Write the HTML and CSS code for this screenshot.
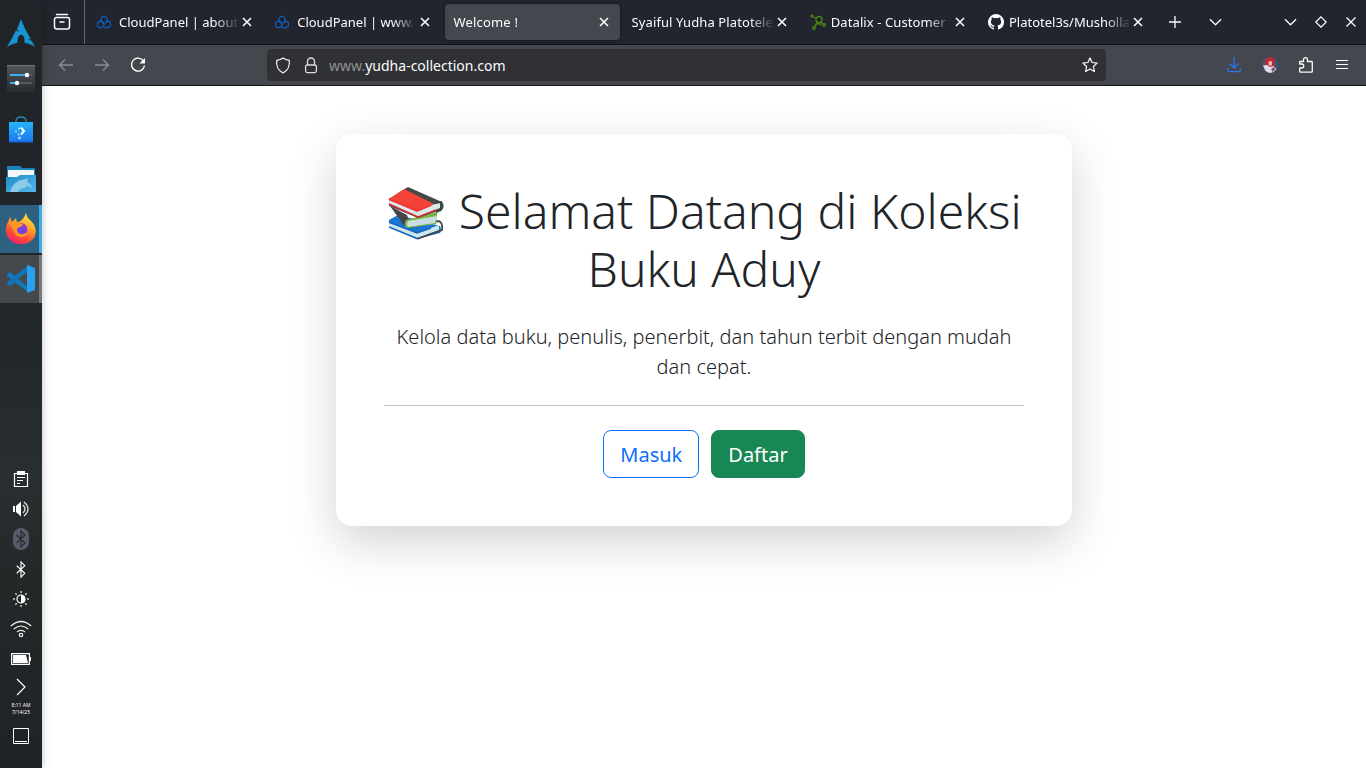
FILE: index.html
```html
<!DOCTYPE html>
<html lang="id">
<head>
<meta charset="utf-8">
<title>Welcome !</title>
<link rel="stylesheet" href="styles.css">
</head>
<body>
<svg class="defs" width="0" height="0">
  <defs>
    <linearGradient id="bagFill" x1="0" y1="0" x2="0" y2="1"><stop offset="0" stop-color="#25b5f8"/><stop offset="1" stop-color="#1a76f0"/></linearGradient>
    <linearGradient id="folderFill" x1="0" y1="0" x2="1" y2="1"><stop offset="0" stop-color="#1c8bc8"/><stop offset="1" stop-color="#55b9e9"/></linearGradient>
    <linearGradient id="foxFill" x1=".8" y1="0" x2=".3" y2="1"><stop offset="0" stop-color="#fff04a"/><stop offset=".4" stop-color="#ffa22a"/><stop offset=".72" stop-color="#ff4b36"/><stop offset="1" stop-color="#f01f75"/></linearGradient>
    <linearGradient id="setFill" x1="0" y1="0" x2="0" y2="1"><stop offset="0" stop-color="#55585b"/><stop offset="1" stop-color="#292c2f"/></linearGradient>
    <symbol id="x" viewBox="0 0 10 10"><path d="M1 1l8 8M9 1l-8 8" fill="none" stroke="currentColor" stroke-width="1.6"/></symbol>
    <symbol id="down" viewBox="0 0 14 8"><path d="M1 1l6 6 6-6" fill="none" stroke="currentColor" stroke-width="1.4"/></symbol>
    <symbol id="cloud" viewBox="0 0 14 14"><g fill="none" stroke="#0d5fc4" stroke-width="1.300" stroke-linecap="round"><path d="M4 6.200A3.300 3.300 0 1 1 9.900 6.200Q9.400 7.600 8 8"/><path d="M5.800 7.200A3.200 3.200 0 1 0 4 12.600Q6.200 12.600 7 10.400"/><path d="M9.900 6.200a3.250 3.250 0 1 1 .1 6.400H7.500M4 6.200Q7 7 7 10.400"/></g></symbol>
    <symbol id="bt" viewBox="0 0 12 18"><path d="M1.500 5l8.500 8-4 4V1l4 4-8.500 8" fill="none" stroke="currentColor" stroke-width="1.2"/></symbol>
  </defs>
</svg>
<div class="desktop">
  <aside class="dock">
    <div class="launch arch"><svg width="30" height="30" viewBox="0 0 30 30"><path d="M15 1C13.600 5 12.500 7.700 10.800 11.400l3 2.600-4-1.400C7.300 18 4.600 23 1 29c4.500-2.600 7.400-3.800 10.700-4.500-.5-4 .7-7.800 3.400-7.800s4 3.800 3.300 7.800c3.400.700 6.300 2 10.600 4.500L25.700 23l-4-2 3.200.3C20.600 13.500 17.400 8.200 15 1z" fill="#1793d1"/></svg></div>
    <div class="launch settings"><svg width="28" height="28" viewBox="0 0 28 28"><path d="M0 0h28v27H0z" fill="url(#setFill)"/><path d="M0 .5h28" stroke="#73777a"/><path d="M3 10h22M3 18h22" stroke="#56595c" stroke-width="2"/><path d="M3 10h17M3 18h7" stroke="#3daee9" stroke-width="2"/><circle cx="20" cy="10" r="2.200" fill="#fff"/><circle cx="10" cy="18" r="2.200" fill="#fff"/></svg></div>
    <div class="launch"><svg width="28" height="30" viewBox="0 0 28 30"><path d="M9 11V7q0-4 5-4t5 4v4" fill="none" stroke="#2389b8" stroke-width="1.300"/><path d="M2 8h24v20H2z" fill="url(#bagFill)"/><path d="M2 28h24" stroke="#1261c9"/><path d="M14 13.500l3 3.500-3 3.500" fill="none" stroke="#fff" stroke-width="2"/><g fill="#bfe6ff"><circle cx="9" cy="17.500" r=".9"/><circle cx="12" cy="14.500" r="1"/><circle cx="11.500" cy="20.500" r=".9"/><circle cx="12.500" cy="24" r="1.300"/></g></svg></div>
    <div class="launch"><svg width="30" height="26" viewBox="0 0 30 26"><path d="M1 0h13l2 2h13v14H1z" fill="#1683bc"/><path d="M2 4h26v12H2z" fill="#f4f7f9"/><path d="M0 11h11l3-2h16v17H0z" fill="url(#folderFill)"/><path d="M4 26c2-7 7-12 14-12.500l4-1.500-1 3.500c3 1.500 5 4.500 5 7l-5-3c-1 3-3 2-5 3-2 .5-3 1.500-4 3.500z" fill="#8acbe9"/></svg></div>
    <div class="launch running focused"><svg width="32" height="34" viewBox="0 0 32 34"><path d="M21 1c1 4 2 5 5 8 7 7 5 14 2 18-6 7-18 7-24 0C0 22 0 15 3 10l2-5 2 5 4-4 1 4c3 0 7-3 9-9z" fill="url(#foxFill)"/><circle cx="16" cy="17.500" r="6.300" fill="#7542e5"/><path d="M13 12q8-2 9 6-4-4-9-6z" fill="#9c38dc"/><path d="M3 11l6-1c4-1 6 2 9 2.500 0 3-5 2-6 4.500 0 3 1 4.500 4 5 3 1 4-2 7-1-3 6-12 5-14-1-1-3-1-5-6-9z" fill="#ff9822"/></svg></div>
    <div class="launch running"><svg width="30" height="30" viewBox="0 0 30 30"><path d="M1 10l3-2 19 14v7L1 12z" fill="#1277bb"/><path d="M1 20l3 2L23 8V1L1 18z" fill="#0e74b8"/><path d="M21 1l8 3v22l-8 3z" fill="#29a0ec"/><path d="M21 8v14l-9-7z" fill="#45494d"/></svg></div>
    <div class="tray">
      <div class="status"><svg width="16" height="18" viewBox="0 0 16 18"><path d="M1.500 3.500h13v13h-13z" fill="none" stroke="#fff" stroke-width="1.200"/><path d="M4 1h8v4H4z" fill="#fff"/><path d="M4 7.500h8M4 10.500h6M4 13.500h3" stroke="#fff"/></svg></div>
      <div class="status"><svg width="18" height="18" viewBox="0 0 18 18"><path d="M1 6h2v6H1zM4 6l5-4.500v15L4 12z" fill="#fff"/><path d="M11 5q4 4 0 8M12 2q8 7 0 14" fill="none" stroke="#ddd" stroke-width="1.300"/></svg></div>
      <div class="status"><span class="bt-off"><svg width="12" height="18"><use href="#bt"/></svg></span></div>
      <div class="status"><svg width="12" height="17"><use href="#bt"/></svg></div>
      <div class="status"><svg width="18" height="18" viewBox="0 0 18 18"><circle cx="9" cy="9" r="4" fill="none" stroke="#fff" stroke-width="1.200"/><path d="M9 5a4 4 0 0 1 0 8z" fill="#fff"/><path d="M9 1v2M9 15v2M1 9h2M15 9h2M3.300 3.300l1.500 1.500M13.200 13.200l1.500 1.500M14.700 3.300l-1.500 1.500M4.800 13.200l-1.500 1.500" stroke="#ccc" stroke-width="1.500"/></svg></div>
      <div class="status"><svg width="22" height="18" viewBox="0 0 22 18"><g fill="none" stroke="#eee" stroke-width="1.200"><path d="M.800 6q10.200-9 20.400 0M3.800 9q7.200-6 14.400 0M7 12q4-3.300 8 0"/><circle cx="11" cy="15" r="1.700"/></g></svg></div>
      <div class="status"><svg width="20" height="14" viewBox="0 0 20 14"><path d="M.600 1.600h17.800v10.800H.600z" fill="none" stroke="#fff" stroke-width="1.200"/><path d="M2 3h13l2 8H2zM19 5h1v4h-1z" fill="#fff"/></svg></div>
      <div class="status arrow"><svg width="10" height="18" viewBox="0 0 10 18"><path d="M1 1l8 8-8 8" fill="none" stroke="#fff" stroke-width="1.200"/></svg></div>
      <div class="clock">8:11 AM<br>7/14/25</div>
      <svg width="16" height="16" viewBox="0 0 16 16"><path d="M.500.500h15v15H.500zM2 13.500h12" fill="none" stroke="#fff"/></svg>
    </div>
  </aside>
  <main class="browser">
    <div class="tabbar">
      <div class="overview"><svg width="18" height="18" viewBox="0 0 18 18"><path d="M3.500 1.500h11M3.500 4.500h11a2 2 0 0 1 2 2v7a2.500 2.500 0 0 1-2.500 2.500H4a2.500 2.500 0 0 1-2.500-2.500v-7a2 2 0 0 1 2-2zM7 9h4" fill="none" stroke="#fbfbfe" stroke-width="1.500" stroke-linecap="round" stroke-linejoin="round"/></svg></div>
      <div class="tabs">
        <div class="tab"><svg class="fav" viewBox="0 0 14 14"><use href="#cloud"/></svg><span class="label">CloudPanel | about</span><svg class="close"><use href="#x"/></svg></div>
        <div class="tab"><svg class="fav" viewBox="0 0 14 14"><use href="#cloud"/></svg><span class="label">CloudPanel | www.</span><svg class="close"><use href="#x"/></svg></div>
        <div class="tab active"><span class="label wide">Welcome !</span><svg class="close"><use href="#x"/></svg></div>
        <div class="tab"><span class="label snug">Syaiful Yudha Platotele</span><svg class="close"><use href="#x"/></svg></div>
        <div class="tab"><svg class="fav datalix" viewBox="0 0 16 16"><g fill="none" stroke="#4c8514" stroke-width="1.300"><circle cx="9" cy="5.500" r="3"/><circle cx="4" cy="14" r="1.400"/><circle cx="14" cy="11" r="1.400"/><circle cx="2" cy="2" r="1"/><path d="M3 3l3 1M7.500 8l-3 4.500M10.500 8l2.500 2M5 12q3-4 6-1"/></g></svg><span class="label snug">Datalix - Customer</span><svg class="close"><use href="#x"/></svg></div>
        <div class="tab"><svg class="fav github" viewBox="0 0 16 16"><path fill="#fff" d="M8 0a8 8 0 0 0-2.530 15.590c.4.070.55-.17.55-.38v-1.490C3.800 14.190 3.330 12.780 3.330 12.780c-.36-.92-.89-1.170-.89-1.170-.73-.5.050-.49.050-.49.810.060 1.230.83 1.230.83.720 1.230 1.880.87 2.340.67.070-.52.280-.87.510-1.070-1.780-.2-3.640-.89-3.640-3.950 0-.87.310-1.590.820-2.150-.08-.2-.36-1.020.080-2.120 0 0 .67-.21 2.200.82a7.700 7.700 0 0 1 4 0c1.530-1.040 2.200-.82 2.200-.82.440 1.100.160 1.920.080 2.120.51.560.820 1.270.820 2.150 0 3.070-1.870 3.750-3.650 3.950.29.250.54.730.54 1.480v2.180c0 .21.150.46.550.38A8 8 0 0 0 8 0z"/></svg><span class="label">Platotel3s/Musholla</span><svg class="close"><use href="#x"/></svg></div>
      </div>
      <svg class="plus" width="12" height="12" viewBox="0 0 12 12"><path d="M6 0v12M0 6h12" stroke="#fbfbfe" stroke-width="1.300"/></svg>
      <svg class="list" width="13" height="8"><use href="#down"/></svg>
      <div class="controls">
        <svg width="13" height="8"><use href="#down"/></svg>
        <svg width="12" height="12" viewBox="0 0 12 12"><path d="M6 .800L11.200 6 6 11.200.800 6z" fill="none" stroke="#fff" stroke-width="1.200"/></svg>
        <svg width="12" height="12" viewBox="0 0 12 12"><path d="M1.500 1.500l9 9M10.500 1.500l-9 9" stroke="#fff" stroke-width="1.300"/></svg>
      </div>
    </div>
    <div class="toolbar">
      <div class="nav">
        <svg width="16" height="16" viewBox="0 0 16 16"><path d="M15 8H1.500M7 2.500L1.500 8 7 13.500" fill="none" stroke="#8b8c92" stroke-width="1.300"/></svg>
        <svg width="16" height="16" viewBox="0 0 16 16"><path d="M1 8h13.500M9 2.500L14.500 8 9 13.500" fill="none" stroke="#8b8c92" stroke-width="1.300"/></svg>
        <svg width="16" height="16" viewBox="0 0 16 16"><path d="M13.500 4A6.500 6.500 0 1 0 14.500 8.500" fill="none" stroke="#fbfbfe" stroke-width="1.400"/><path d="M15 1V6.500H9.500z" fill="#fbfbfe"/></svg>
      </div>
      <div class="url">
        <svg width="16" height="17" viewBox="0 0 16 17"><path d="M8 1c2 1.500 4 2 6.300 2.300C15 9 12.500 14 8 16 3.500 14 1 9 1.700 3.300 4 3 6 2.500 8 1z" fill="none" stroke="#fbfbfe" stroke-width="1.200" stroke-linejoin="round"/></svg>
        <svg width="14" height="17" viewBox="0 0 14 17"><path d="M3.500 8V4.500a3.500 3.500 0 0 1 7 0V8" fill="none" stroke="#ddd" stroke-width="1.300"/><rect x="1.600" y="8" width="10.800" height="7.600" rx="1.500" fill="none" stroke="#ddd" stroke-width="1.300"/></svg>
        <span class="address"><span class="dim">www.</span>yudha-collection.com</span>
        <svg width="16" height="16" viewBox="0 0 16 16"><path d="M8 .900l2.100 4.600 5 .6-3.700 3.400 1 5L8 12l-4.400 2.500 1-5L.900 6.100l5-.6z" fill="none" stroke="#fbfbfe" stroke-width="1.200" stroke-linejoin="round"/></svg>
      </div>
      <div class="tools">
        <svg width="16" height="16" viewBox="0 0 16 16"><path d="M8 0v11M3.500 6.500L8 11l4.500-4.500M1.600 11.500v1.600q0 1.600 1.600 1.600h9.600q1.600 0 1.600-1.600v-1.600" fill="none" stroke="#2874f5" stroke-width="1.300"/></svg>
        <svg width="16" height="16" viewBox="0 0 16 16"><circle cx="8" cy="8" r="8" fill="#3b5674"/><path d="M3.500 8Q2 .500 8 0q6 .500 4.500 6.500L12 10H5z" fill="#bf2734"/><path d="M6.500 5q2-2 3.500 0v3l-2 1-1.500-1z" fill="#edb4af"/><path d="M1 8.500l4-.5 3 2 3.500-1 3 3-3 3-4 1-4-2z" fill="#e2dcea"/><path d="M9 12l3-2 1.500 2-3 3z" fill="#7b5268"/></svg>
        <svg width="16" height="16" viewBox="0 0 16 16"><path d="M2 4.500h3.500v-1.800a2 2 0 0 1 4 0v1.800h4q.800 0 .800.800v9q0 .900-.900.900H2.600q-.900 0-.900-.9V11h2a2 2 0 0 0 0-4h-2V4.500z" fill="none" stroke="#fbfbfe" stroke-width="1.300" stroke-linejoin="round"/></svg>
        <svg width="16" height="16" viewBox="0 0 16 16"><path d="M2 3.500h12M2 7.500h12M2 11.500h12" stroke="#fbfbfe" stroke-width="1.200"/></svg>
      </div>
    </div>
    <section class="page">
      <div class="card">
        <h1><svg class="books" width="58" height="54" viewBox="0 0 58 54"><path d="M2 34l9-5 16 4 26 7q2 4 0 7L30 53 2 41z" fill="#1976d2"/><path d="M2 37l28 10 22-8v5L30 52 2 41z" fill="#cfe6ec"/><path d="M22 41l30-6q4 2 3 9L30 53" fill="none" stroke="#454749" stroke-width="1.800"/><path d="M2 36l28 11 14-5M2 41l28 11.500" fill="none" stroke="#1769bd" stroke-width="1.600"/><path d="M3 20l17 9 4 12q-5 1-8-3z" fill="#444649"/><path d="M19 34l31-8v3l-1 9-29 4q-4-3-1-8z" fill="#7cb342"/><path d="M21 35l29-5-2 7-27 4q-2-3 0-6z" fill="#c8dfe1"/><path d="M2 13L21 1l34 15q3 5-1 8L31 32 2 20z" fill="#454749"/><path d="M2 13L17 3l30 15-17 6z" fill="#f44336"/><path d="M2 14l28 11 23-9v6L31 31 2 18z" fill="#dce9ec"/><path d="M2 13l28 12 14-6" fill="none" stroke="#ef3932" stroke-width="2"/><path d="M2 18l29 13 18-7" fill="none" stroke="#d52f2f" stroke-width="1.500"/><path d="M48 17l6-1q3 4 0 8l-5 2" fill="none" stroke="#424548" stroke-width="2"/></svg> Selamat Datang di Koleksi Buku Aduy</h1>
        <p class="lead">Kelola data buku, penulis, penerbit, dan tahun terbit dengan mudah dan cepat.</p>
        <hr>
        <div class="actions"><a class="btn outline">Masuk</a><a class="btn success">Daftar</a></div>
      </div>
    </section>
  </main>
</div>
</body>
</html>
```
FILE: styles.css
```css
* { box-sizing: border-box; }
body { margin: 0; overflow: hidden; font-family: "Noto Sans", sans-serif; color: #fbfbfe; }
svg { display: block; flex: none; }
.defs { position: absolute; }
.desktop { display: flex; width: 1366px; height: 768px; }

.dock { display: flex; flex-direction: column; flex: none; width: 42px; background: linear-gradient(#202429, #22272a 45%, #292e30 62%, #242829 75%, #202326); z-index: 1; box-shadow: 0 0 8px rgba(0,0,0,.25); }
.launch { display: flex; align-items: center; justify-content: center; height: 48px; margin-bottom: 2px; flex: none; }
.arch { height: 55px; margin: 0; padding-top: 11px; }
.running { background: #44484b; border-right: 3px solid #75797c; }
.running svg { margin-left: 3px; }
.focused { background: #2e607f; border-color: #3daee9; }
.tray { display: flex; flex-direction: column; align-items: center; margin-top: auto; padding-bottom: 24px; }
.status { display: flex; align-items: center; justify-content: center; height: 30px; }
.arrow { height: 27px; padding-bottom: 1px; }
.bt-off { display: flex; align-items: center; justify-content: center; width: 16px; height: 22px; border-radius: 8px; background: #575c68; color: #272b30; }
.clock { height: 14px; margin: 1px 0 12px; font-size: 5px; line-height: 7px; text-align: center; white-space: nowrap; }

.browser { flex: 1; min-width: 0; background: #fff; }
.tabbar { display: flex; align-items: center; height: 45px; background: #23252e; border-bottom: 1px solid #121318; }
.overview { display: flex; align-items: center; justify-content: center; width: 43px; height: 44px; padding-right: 2px; border-right: 1px solid #65666c; }
.tabs { display: flex; gap: 3.2px; margin-left: 4px; }
.tab { display: flex; align-items: center; width: 175px; height: 36px; padding: 0 12px 0 8px; border-radius: 4px; }
.tab.active { background: #45474e; box-shadow: 0 0 3px rgba(0,0,0,.6); }
.active .close { margin-right: -1px; }
.fav { width: 14px; height: 14px; margin-right: 8px; }
.datalix { width: 16px; height: 16px; margin-right: 5px; }
.github { width: 16px; height: 16px; margin-right: 5px; }
.label { flex: 1; overflow: hidden; font-size: 13px; line-height: 20px; white-space: nowrap; -webkit-mask-image: linear-gradient(90deg, #000 calc(100% - 26px), transparent); mask-image: linear-gradient(90deg, #000 calc(100% - 26px), transparent); }
.wide { letter-spacing: .2px; }
.snug { letter-spacing: .1px; }
.close { width: 10px; height: 10px; margin-left: 2px; }
.plus { margin-left: 14px; }
.list { margin-left: 28px; }
.controls { display: flex; align-items: center; gap: 18px; margin: 0 9px 0 auto; }

.toolbar { display: flex; align-items: center; height: 41px; background: #45474e; border-bottom: 1px solid #16161a; }
.nav { display: flex; gap: 20px; width: 225px; padding-left: 16px; }
.url { display: flex; align-items: center; width: 839px; height: 32px; padding: 0 8px; border-radius: 4px; background: #303135; }
.url svg:nth-child(2) { margin-left: 13px; }
.address { flex: 1; margin-left: 11px; padding-top: 2px; font-size: 14px; line-height: 22px; }
.dim { color: #929296; }
.tools { display: flex; gap: 20px; margin: 0 16px 0 auto; }

.page { display: flex; justify-content: center; align-items: flex-start; height: 682px; padding-top: 48px; color: #212529; }
.card { width: 736px; height: 392px; padding: 48px; border-radius: 16px; background: #fff; box-shadow: 0 16px 48px rgba(0,0,0,.175); text-align: center; }
h1 { margin: 0 0 23px; font-size: 48px; font-weight: 300; line-height: 1.2; }
.books { display: inline-block; margin: 0 1px; vertical-align: -11px; }
.lead { margin: 0 0 23px; padding-top: 1px; font-size: 20px; font-weight: 300; line-height: 1.5; }
hr { margin: 0 0 24px; border: 0; border-top: 1px solid #c4c5c6; }
.actions { display: flex; justify-content: center; gap: 12px; }
.btn { padding: 9px 16px 7px; border: 1px solid #0d6efd; border-radius: 8px; font-size: 20px; line-height: 30px; color: #0d6efd; }
.success { border-color: #198754; background: #198754; color: #fff; }
```
